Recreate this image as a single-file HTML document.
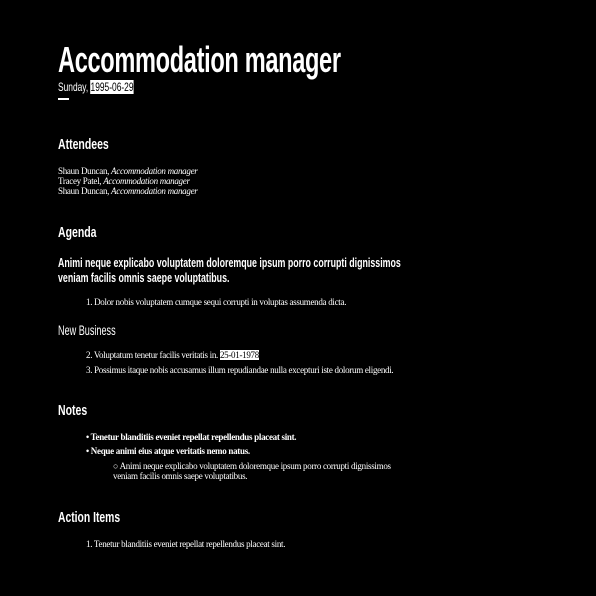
<!DOCTYPE html>
<html><head><meta charset="utf-8"><style>
html,body{margin:0;padding:0;background:#000;width:596px;height:596px;overflow:hidden;color:#fff}
.a{position:absolute;white-space:nowrap;line-height:1}
.h{font-family:"Liberation Sans",sans-serif;font-weight:bold;transform-origin:0 0}
.s{font-family:"Liberation Serif",serif;font-size:9px;letter-spacing:-0.3px}
.hl{background:#fff;color:#000}
</style></head><body>
<div class="a h" style="left:58px;top:42px;font-size:36px;transform:scaleX(0.655);letter-spacing:-0.5px">Accommodation manager</div>
<div class="a h" style="left:58px;top:81px;font-size:12px;font-weight:normal;transform:scaleX(0.70)">Sunday, <span class="hl">1995-06-29</span></div>
<div class="a" style="left:58px;top:98px;width:11px;height:2px;background:#fff"></div>
<div class="a h" style="left:58px;top:137px;font-size:15px;transform:scaleX(0.70)">Attendees</div>
<div class="a s" style="left:58px;top:167px">Shaun Duncan, <i>Accommodation manager</i></div>
<div class="a s" style="left:58px;top:177px">Tracey Patel, <i>Accommodation manager</i></div>
<div class="a s" style="left:58px;top:187px">Shaun Duncan, <i>Accommodation manager</i></div>
<div class="a h" style="left:58px;top:225px;font-size:15px;transform:scaleX(0.70)">Agenda</div>
<div class="a h" style="left:58px;top:256px;font-size:13px;transform:scaleX(0.68)">Animi neque explicabo voluptatem doloremque ipsum porro corrupti dignissimos</div>
<div class="a h" style="left:58px;top:271px;font-size:13px;transform:scaleX(0.68)">veniam facilis omnis saepe voluptatibus.</div>
<div class="a s" style="left:86px;top:298px">1. Dolor nobis voluptatem cumque sequi corrupti in voluptas assumenda dicta.</div>
<div class="a h" style="left:58px;top:323px;font-size:14px;font-weight:normal;transform:scaleX(0.65)">New Business</div>
<div class="a s" style="left:86px;top:351px">2. Voluptatum tenetur facilis veritatis in. <span class="hl">25-01-1978</span></div>
<div class="a s" style="left:86px;top:366px">3. Possimus itaque nobis accusamus illum repudiandae nulla excepturi iste dolorum eligendi.</div>
<div class="a h" style="left:58px;top:403px;font-size:15px;transform:scaleX(0.70)">Notes</div>
<div class="a s" style="left:86px;top:433px;font-weight:bold">• Tenetur blanditiis eveniet repellat repellendus placeat sint.</div>
<div class="a s" style="left:86px;top:447px;font-weight:bold">• Neque animi eius atque veritatis nemo natus.</div>
<div class="a s" style="left:113px;top:462px">○ Animi neque explicabo voluptatem doloremque ipsum porro corrupti dignissimos</div>
<div class="a s" style="left:113px;top:472px">veniam facilis omnis saepe voluptatibus.</div>
<div class="a h" style="left:58px;top:510px;font-size:15px;transform:scaleX(0.69)">Action Items</div>
<div class="a s" style="left:86px;top:540px">1. Tenetur blanditiis eveniet repellat repellendus placeat sint.</div>
</body></html>
